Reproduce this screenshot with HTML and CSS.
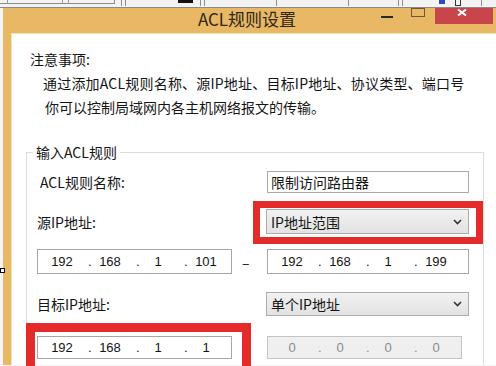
FILE: index.html
```html
<!DOCTYPE html>
<html>
<head>
    <meta charset="utf-8">
    <title>ACL规则设置</title>
    <link rel="stylesheet" href="styles.css">
</head>
<body>
    <div class="topbar">
        <span class="tb-box"><i class="d1"></i><i class="d2"></i><i class="d3"></i></span>
        <span class="tick" style="margin-left:6px"></span>
        <span class="tick" style="margin-left:3px"></span>
        <span class="blk" style="margin-left:52px"></span>
        <span class="tick" style="margin-left:7px"></span>
        <span class="tick" style="margin-left:3px"></span>
        <span class="tick" style="margin-left:71px"></span>
        <span class="tick" style="margin-left:71px"></span>
        <span class="tick" style="margin-left:49px"></span>
        <span class="tick" style="margin-left:3px"></span>
        <span class="blue" style="margin-left:36px"></span>
        <span class="sq" style="margin-left:10px"></span>
        <span class="tick" style="margin-left:20px"></span>
    </div>

    <div class="window">
        <div class="titlebar">
            <span class="title">ACL规则设置</span>
            <div class="controls">
                <span class="btn-min"></span>
                <span class="btn-max"></span>
                <span class="btn-close">
                    <svg width="10" height="7" viewBox="0 0 10 7"><path d="M1 0.5 L9 6.5 M9 0.5 L1 6.5" stroke="#fff" stroke-width="2" fill="none"/></svg>
                </span>
            </div>
        </div>
        <div class="client">
            <div class="notes">
                <p>注意事项:</p>
                <p class="l1">通过添加ACL规则名称、源IP地址、目标IP地址、协议类型、端口号</p>
                <p class="l2">你可以控制局域网内各主机网络报文的传输。</p>
            </div>

            <fieldset class="acl">
                <legend>输入ACL规则</legend>

                <div class="row row-name">
                    <label class="lbl lbl-name">ACL规则名称:</label>
                    <div class="txt">限制访问路由器</div>
                </div>

                <div class="row row-src">
                    <label class="lbl">源IP地址:</label>
                    <div class="sel">
                        <span>IP地址范围</span>
                        <svg width="9" height="6" viewBox="0 0 9 6"><path d="M1 1 L4.5 4.5 L8 1" stroke="#333" stroke-width="1.6" fill="none"/></svg>
                    </div>
                </div>

                <div class="row row-ip1">
                    <div class="ip">
                        <span class="oct">192</span><span class="dot">.</span>
                        <span class="oct">168</span><span class="dot">.</span>
                        <span class="oct">1</span><span class="dot">.</span>
                        <span class="oct">101</span>
                    </div>
                    <span class="dash">–</span>
                    <div class="ip">
                        <span class="oct">192</span><span class="dot">.</span>
                        <span class="oct">168</span><span class="dot">.</span>
                        <span class="oct">1</span><span class="dot">.</span>
                        <span class="oct">199</span>
                    </div>
                </div>

                <div class="row row-dst">
                    <label class="lbl">目标IP地址:</label>
                    <div class="sel">
                        <span>单个IP地址</span>
                        <svg width="9" height="6" viewBox="0 0 9 6"><path d="M1 1 L4.5 4.5 L8 1" stroke="#333" stroke-width="1.6" fill="none"/></svg>
                    </div>
                </div>

                <div class="row row-ip2">
                    <div class="ip">
                        <span class="oct">192</span><span class="dot">.</span>
                        <span class="oct">168</span><span class="dot">.</span>
                        <span class="oct">1</span><span class="dot">.</span>
                        <span class="oct">1</span>
                    </div>
                    <span></span>
                    <div class="ip off">
                        <span class="oct">0</span><span class="dot">.</span>
                        <span class="oct">0</span><span class="dot">.</span>
                        <span class="oct">0</span><span class="dot">.</span>
                        <span class="oct">0</span>
                    </div>
                </div>
            </fieldset>
        </div>
    </div>

    <!-- annotations drawn over the screenshot -->
    <div class="mark mark-src"></div>
    <div class="mark mark-dst"></div>
    <div class="handle"></div>
</body>
</html>
```

FILE: styles.css
```css
* {
    margin: 0;
    padding: 0;
    box-sizing: border-box;
}

html {
    overflow: hidden;
}

body {
    width: 496px;
    height: 366px;
    overflow: hidden;
    position: relative;
    background: #f4f4f4;
    font-family: "Noto Sans CJK SC", "Noto Sans", sans-serif;
    font-size: 14px;
    color: #141414;
}

/* strip of the window behind */
.topbar {
    height: 8px;
    border-bottom: 1px solid #8a8a8a;
    background: #f3f3f3;
    display: flex;
    align-items: flex-start;
}

.topbar > * {
    flex-shrink: 0;
}

.tb-box {
    width: 115px;
    height: 4px;
    border-bottom: 1px solid #8c8c8c;
    border-right: 1px solid #8c8c8c;
    display: flex;
}

.tb-box i {
    display: block;
    width: 1px;
    height: 4px;
    background: #9a9a9a;
}

.tb-box .d1 { margin-left: 7px; }
.tb-box .d2 { margin-left: 54px; }
.tb-box .d3 { margin-left: 5px; }

.tick {
    width: 1px;
    height: 6px;
    background: #8e8e8e;
}

.blk {
    width: 15px;
    height: 3px;
    background: #111;
}

.blue {
    width: 6px;
    height: 4px;
    background: #2b4db8;
}

.sq {
    width: 6px;
    height: 6px;
    border: 1px solid #333;
    border-top: 0;
}

/* dialog */
.window {
    width: 504px;
    margin-left: 3px;
    background: #e8b865;
    padding-left: 8px;
}

.titlebar {
    height: 25px;
    display: flex;
    align-items: flex-start;
}

.title {
    flex: 1;
    text-align: center;
    padding-left: 102px;
    font-size: 17px;
    line-height: 22px;
    color: #2f2613;
    white-space: nowrap;
}

.controls {
    flex: 0 0 112px;
    display: flex;
    align-items: flex-start;
    margin-right: 14px;
}

.controls > * {
    flex-shrink: 0;
}

.btn-min {
    width: 12px;
    height: 2px;
    background: #2a2a2a;
    margin-top: 8px;
}

.btn-max {
    width: 14px;
    height: 9px;
    border: 1px solid #6d5a34;
    margin-left: 18px;
}

.btn-close {
    width: 58px;
    height: 16px;
    margin-left: 10px;
    background: #c8464b;
    padding: 1px 0 0 22px;
}

.btn-close svg {
    display: block;
}

.client {
    background: #fff;
    border-left: 1px solid #f5e2bd;
    border-top: 1px solid #f5e2bd;
    height: 332px;
    overflow: hidden;
}

.notes {
    padding: 13px 0 0 18px;
    line-height: 24px;
}

.notes .l1 {
    padding-left: 13px;
    letter-spacing: 0.2px;
}

.notes .l2 {
    padding-left: 15px;
}

.acl {
    margin: 22px 0 0 14px;
    width: 458px;
    border: 1px solid #dcdcdc;
    padding: 8px 0 0 10px;
    height: 260px;
}

.acl legend {
    margin-left: -4px;
    padding: 0 3px;
    line-height: 22px;
}

.row {
    display: grid;
    grid-template-columns: 195px 35px 202px;
    align-items: center;
}

.lbl {
    grid-column: 1 / 3;
}

.lbl-name {
    padding-left: 3px;
}

.row-name { height: 22px; }
.row-src { height: 25px; margin-top: 16px; }
.row-ip1 { height: 25px; margin-top: 15px; }
.row-dst { height: 24px; margin-top: 18px; }
.row-ip2 { height: 23px; margin-top: 20px; }

.txt {
    height: 22px;
    border: 1px solid #a9a9a9;
    padding-left: 3px;
    line-height: 20px;
}

.sel {
    height: 100%;
    margin-left: -1px;
    border: 1px solid #acacac;
    background: linear-gradient(#f2f2f2, #e2e2e2);
    display: flex;
    align-items: center;
    justify-content: space-between;
    padding: 0 6px 0 4px;
}

.ip {
    height: 100%;
    border: 1px solid #a6a6a6;
    background: #fff;
    display: flex;
    align-items: center;
    padding-left: 8px;
    font-family: "Liberation Sans", sans-serif;
    font-size: 13px;
}

.ip .oct {
    width: 32px;
    text-align: center;
}

.ip .dot {
    width: 16px;
    padding-left: 10px;
}

.ip.off {
    background: #efefef;
    border-color: #c4c4c4;
    color: #8a8a8a;
    width: 195px;
}

.dash {
    padding-left: 10px;
    font-size: 14px;
}

/* red highlight boxes */
.mark {
    position: absolute;
    border: 7px solid #e52a2a;
}

.mark-src {
    left: 253px;
    top: 201px;
    width: 230px;
    height: 43px;
}

.mark-dst {
    left: 26px;
    top: 323px;
    width: 225px;
    height: 60px;
    border-width: 9px;
}

.handle {
    position: absolute;
    left: 0;
    top: 268px;
    width: 5px;
    height: 5px;
    border: 1px solid #000;
    background: #fff;
}
```
